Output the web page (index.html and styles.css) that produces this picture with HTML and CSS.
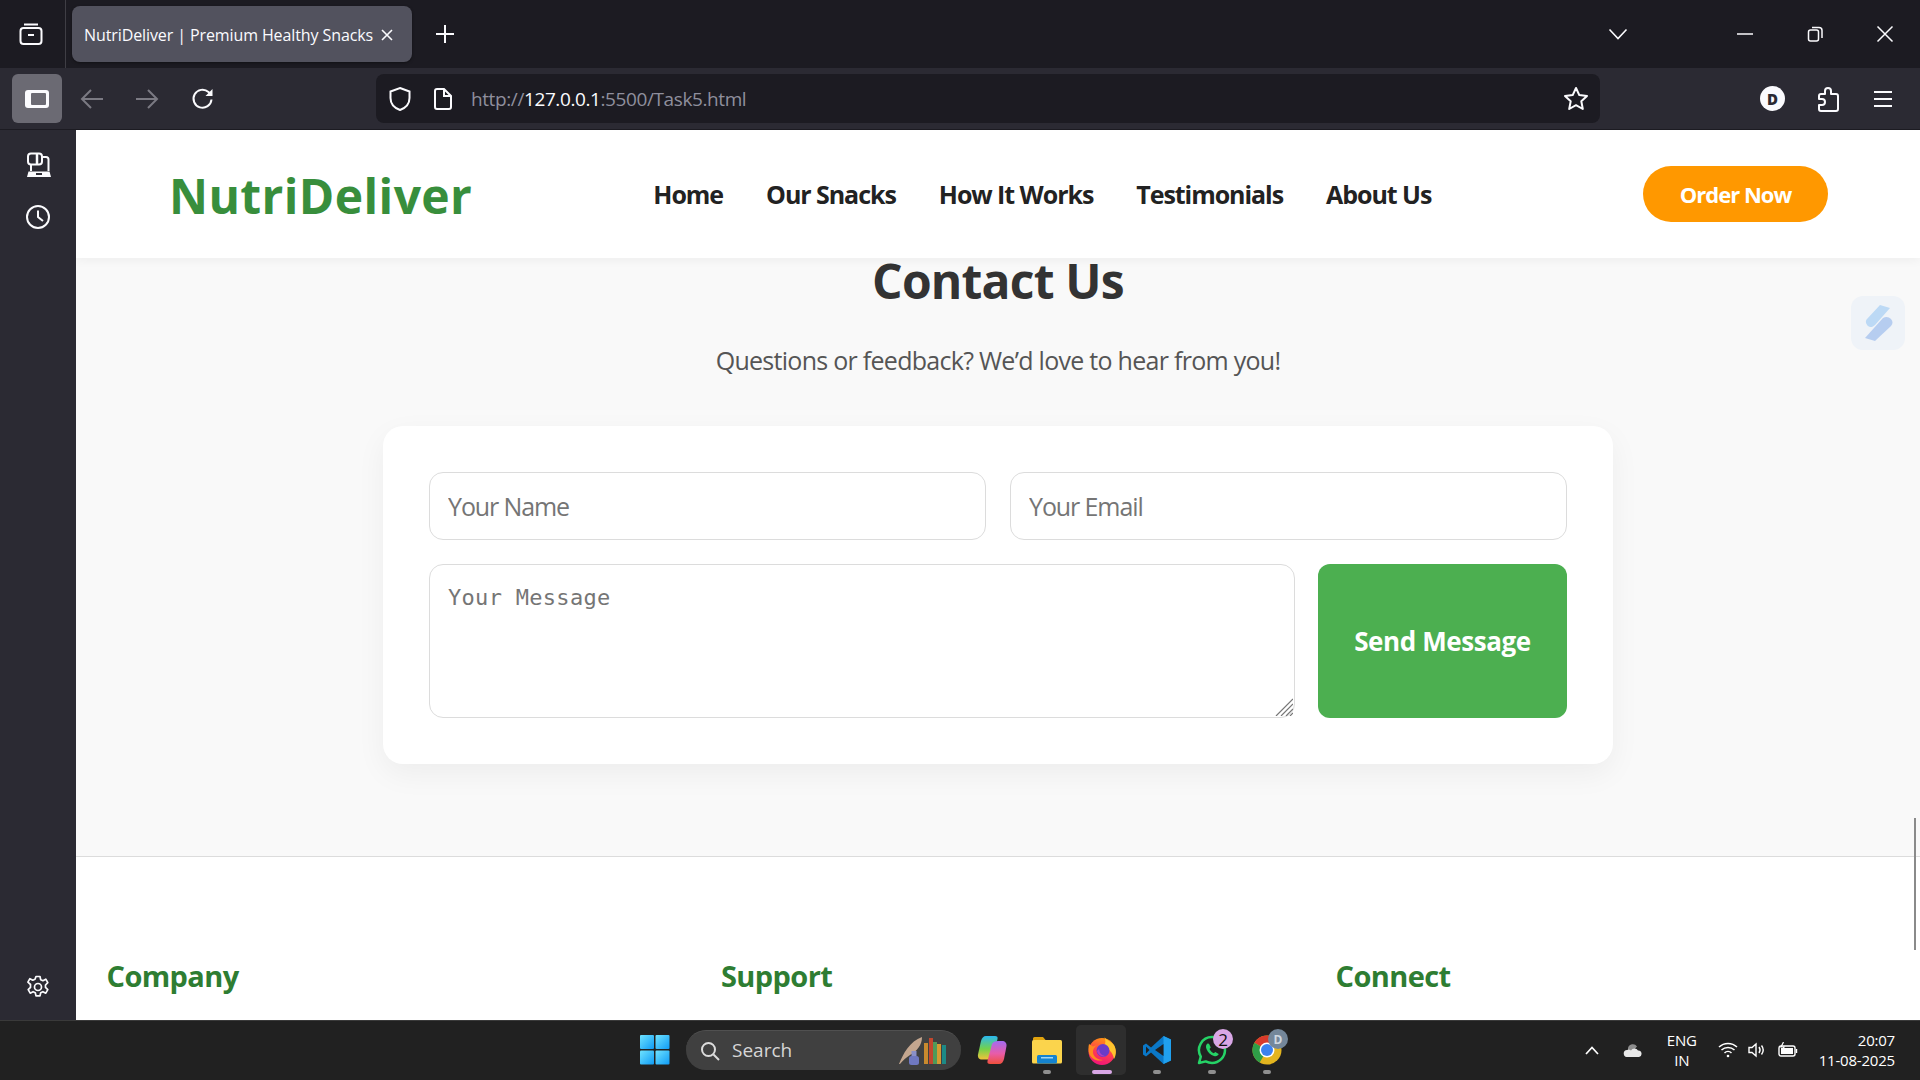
FILE: index.html
```html
<!DOCTYPE html>
<html>
<head>
    <title>NutriDeliver | Premium Healthy Snacks</title>
    <link rel="stylesheet" href="styles.css">
</head>

<body>
    <!-- BROWSER TABS -->
    <div class="tabbar">
        <div class="tabbar-left">
            <svg class="icon" width="26" height="26" viewBox="0 0 26 26" fill="none" stroke="#fbfbfe" stroke-width="2"><path d="M6 3.5h14"/><rect x="2.5" y="7" width="21" height="16" rx="3"/><path d="M10 14h6"/></svg>
        </div>
        <div class="tab">
            <span class="tab-title">NutriDeliver | Premium Healthy Snacks</span>
            <svg width="14" height="14" viewBox="0 0 14 14" stroke="#fbfbfe" stroke-width="1.6"><path d="M2 2l10 10M12 2L2 12"/></svg>
        </div>
        <svg class="new-tab" width="20" height="20" viewBox="0 0 20 20" stroke="#fbfbfe" stroke-width="2"><path d="M10 1v18M1 10h18"/></svg>
        <div class="window-controls">
            <svg class="tab-list" width="20" height="12" viewBox="0 0 20 12" fill="none" stroke="#fbfbfe" stroke-width="1.6"><path d="M1.5 1.5L10 10.5l8.5-9"/></svg>
            <svg class="win-btn" width="18" height="18" viewBox="0 0 18 18" stroke="#fbfbfe" stroke-width="1.5"><path d="M1 9h16"/></svg>
            <svg class="win-btn" width="18" height="18" viewBox="0 0 18 18" fill="none" stroke="#fbfbfe" stroke-width="1.5"><rect x="2.5" y="5" width="10" height="11" rx="2"/><path d="M6 2.5h7a3 3 0 0 1 3 3V13"/></svg>
            <svg class="win-btn" width="18" height="18" viewBox="0 0 18 18" stroke="#fbfbfe" stroke-width="1.5"><path d="M1.5 1.5l15 15M16.5 1.5l-15 15"/></svg>
        </div>
    </div>

    <!-- BROWSER TOOLBAR -->
    <div class="toolbar">
        <div class="sidebar-toggle">
            <svg width="26" height="20" viewBox="0 0 26 20"><rect x="1" y="1" width="24" height="18" rx="3" fill="#fbfbfe"/><rect x="7" y="4" width="15" height="12" rx="1" fill="#6b6a73"/></svg>
        </div>
        <div class="nav-buttons">
            <svg width="24" height="22" viewBox="0 0 24 22" fill="none" stroke="#7b7a83" stroke-width="2"><path d="M23 11H2M11 2l-9 9 9 9"/></svg>
            <svg width="24" height="22" viewBox="0 0 24 22" fill="none" stroke="#7b7a83" stroke-width="2"><path d="M1 11h21M13 2l9 9-9 9"/></svg>
            <svg class="reload" width="24" height="24" viewBox="0 0 24 24" fill="none" stroke="#fbfbfe" stroke-width="2"><path d="M20.5 12.5a9 9 0 1 1-3-7.5l3 3"/><path d="M21.5 2v7h-7" stroke-width="0" fill="#fbfbfe"/></svg>
        </div>
        <div class="urlbar">
            <svg width="24" height="26" viewBox="0 0 24 26" fill="none" stroke="#fbfbfe" stroke-width="2"><path d="M12 2l9.5 3.5V12c0 6-4 10-9.5 12C6.5 22 2.5 18 2.5 12V5.5z"/></svg>
            <svg class="url-doc" width="20" height="24" viewBox="0 0 20 24" fill="none" stroke="#fbfbfe" stroke-width="2"><path d="M4 2h7l7 7v11a2 2 0 0 1-2 2H4a2 2 0 0 1-2-2V4a2 2 0 0 1 2-2z"/><path d="M11 2v7h7"/></svg>
            <span class="url-text">http://<b>127.0.0.1</b>:5500/Task5.html</span>
            <svg class="url-star" width="26" height="26" viewBox="0 0 26 26" fill="none" stroke="#fbfbfe" stroke-width="2" stroke-linejoin="round"><path d="M13 2l3.3 7.1 7.7.9-5.7 5.3 1.5 7.7-6.8-3.8-6.800 3.800 1.500-7.700L2 10l7.700-.9z"/></svg>
        </div>
        <div class="toolbar-right">
            <span class="avatar">D</span>
            <svg class="puzzle" width="24" height="26" viewBox="0 0 24 26" fill="none" stroke="#fbfbfe" stroke-width="2" stroke-linejoin="round"><path d="M12 2a3 3 0 0 1 3 3v3h5a2 2 0 0 1 2 2v13a2 2 0 0 1-2 2H5a2 2 0 0 1-2-2v-4h3a3 3 0 0 0 0-6H3v-3a2 2 0 0 1 2-2h4V5a3 3 0 0 1 3-3z"/></svg>
            <svg width="20" height="18" viewBox="0 0 20 18" stroke="#fbfbfe" stroke-width="2"><path d="M1 2h18M1 9h18M1 16h18"/></svg>
        </div>
    </div>

    <div class="window-body">
        <!-- BROWSER SIDEBAR -->
        <div class="sidebar">
            <svg class="side-synced" width="26" height="26" viewBox="0 0 26 26" fill="none" stroke="#fbfbfe" stroke-width="2"><rect x="2" y="1.5" width="14" height="11" rx="3"/><path d="M11 1.5v11" stroke-width="2.5"/><path d="M17 5h3a2.5 2.5 0 0 1 2.5 2.5V19M5 13v6"/><path d="M2.5 19.5h21l1.500 5.500H1z" fill="#fbfbfe" stroke="none"/><rect x="10" y="21" width="6" height="2" fill="#2b2a33" stroke="none"/></svg>
            <svg class="side-clock" width="26" height="26" viewBox="0 0 26 26" fill="none" stroke="#fbfbfe" stroke-width="2"><circle cx="13" cy="13" r="11"/><path d="M13 6.5V13l5 4"/></svg>
            <svg class="side-gear" width="24" height="24" viewBox="0 0 24 24" fill="none" stroke="#fbfbfe" stroke-width="1.7" stroke-linejoin="round"><circle cx="12" cy="12" r="3.5"/><path d="M10 1.5h4l.7 3.2 2.2 1 2.9-1.5 2 3.5-2.300 2.300v2.400l2.300 2.300-2 3.500-2.900-1.500-2.200 1-.7 3.200h-4l-.7-3.200-2.200-1-2.900 1.500-2-3.500 2.300-2.300V9.500L1.900 7.200l2-3.500 2.900 1.500 2.200-1z"/></svg>
        </div>

        <!-- PAGE -->
        <div class="page">
            <header class="site-header">
                <a class="logo">NutriDeliver</a>
                <nav class="site-nav">
                    <a>Home</a>
                    <a>Our Snacks</a>
                    <a>How It Works</a>
                    <a>Testimonials</a>
                    <a>About Us</a>
                </nav>
                <a class="order-btn">Order Now</a>
            </header>

            <section class="contact">
                <h2>Contact Us</h2>
                <p class="contact-sub">Questions or feedback? We’d love to hear from you!</p>
                <form class="contact-card">
                    <div class="form-row">
                        <input type="text" placeholder="Your Name">
                        <input type="email" placeholder="Your Email">
                    </div>
                    <div class="form-row">
                        <div class="message-wrap">
                            <textarea placeholder="Your Message"></textarea>
                            <svg class="resize-grip" width="18" height="18" viewBox="0 0 18 18" stroke="#777" stroke-width="1.2"><path d="M1 18L18 1M6 18L18 6M11 18l7-7M15 18l3-3"/></svg>
                        </div>
                        <button type="button" class="send-btn">Send Message</button>
                    </div>
                </form>
            </section>

            <footer class="site-footer">
                <h3>Company</h3>
                <h3>Support</h3>
                <h3>Connect</h3>
            </footer>

            <!-- extension bubble and overlay scrollbar -->
            <div class="ext-bubble">
                <svg width="30" height="38" viewBox="0 0 30 38"><path d="M17 1l10 3L12 21c-2 2-5 3-7 1s-3-5-1-7z" fill="#bcd9f5"/><path d="M20 14c3-2 6-1 8 1s2 5 0 7L12 37 2 34z" fill="#b6cdf0"/></svg>
            </div>
            <div class="scroll-thumb"></div>
        </div>
    </div>

    <!-- WINDOWS TASKBAR -->
    <div class="taskbar">
        <svg class="start" width="30" height="30" viewBox="0 0 30 30">
            <defs>
                <linearGradient id="winBlue" x1="0" y1="0" x2="1" y2="1"><stop offset="0" stop-color="#6fe3ff"/><stop offset="1" stop-color="#0f9bf5"/></linearGradient>
            </defs>
            <rect x="0" y="0" width="14" height="14" rx="1" fill="url(#winBlue)"/>
            <rect x="15.5" y="0" width="14" height="14" rx="1" fill="url(#winBlue)"/>
            <rect x="0" y="15.5" width="14" height="14" rx="1" fill="url(#winBlue)"/>
            <rect x="15.5" y="15.5" width="14" height="14" rx="1" fill="url(#winBlue)"/>
        </svg>
        <div class="search-pill">
            <svg width="20" height="20" viewBox="0 0 20 20" fill="none" stroke="#dcdcdc" stroke-width="2"><circle cx="8.5" cy="8.5" r="6.5"/><path d="M13.5 13.5L19 19"/></svg>
            <span>Search</span>
            <svg class="doodle" width="52" height="30" viewBox="0 0 52 30">
                <path d="M1 28C5 18 12 5 24 1c0 8-5 14-12 18-3 2-7 5-10 9z" fill="#c4a68f"/>
                <rect x="11" y="20" width="10" height="9" rx="2.5" fill="#6f78c0"/>
                <rect x="13.5" y="15" width="5" height="5" fill="#8a90c8"/>
                <rect x="26" y="7" width="4" height="21" fill="#c98a2e"/>
                <rect x="31" y="2" width="4" height="26" fill="#c2472e"/>
                <rect x="35" y="6" width="4" height="22" fill="#4f9a5a"/>
                <rect x="39" y="8" width="4" height="20" fill="#d49a32"/>
                <rect x="44" y="9" width="4" height="19" fill="#1d8a86"/>
            </svg>
        </div>

        <div class="task-icon">
            <svg width="30" height="30" viewBox="0 0 30 30">
                <defs>
                    <linearGradient id="copA" x1="0" y1="0" x2="0" y2="1"><stop offset="0" stop-color="#2ab8f0"/><stop offset=".55" stop-color="#74d24a"/><stop offset="1" stop-color="#f2c23a"/></linearGradient>
                    <linearGradient id="copB" x1="0" y1="0" x2="0" y2="1"><stop offset="0" stop-color="#a26bf0"/><stop offset=".55" stop-color="#e85ca8"/><stop offset="1" stop-color="#f0503c"/></linearGradient>
                </defs>
                <path d="M9 1h9c2 0 3 1 2.5 3L16 21c-.7 2.5-3 3.5-5 3.5H5c-3 0-4.5-2-4-5L4 6c.7-3 2.5-5 5-5z" fill="url(#copA)"/>
                <path d="M21 6h4c3 0 4.8 2 4.500 5L27 24c-.7 3-2.500 5-5 5h-9c-2 0-3-1-2.500-3L15 9c.7-2 3.500-3 6-3z" fill="url(#copB)"/>
            </svg>
        </div>
        <div class="task-icon running">
            <svg width="30" height="28" viewBox="0 0 30 28">
                <path d="M1 2.5A1.5 1.5 0 0 1 2.5 1h8.5l3 3.500H1z" fill="#e0a30e"/>
                <rect x="0" y="4" width="30" height="23.5" rx="1.5" fill="#fbd44c"/>
                <rect x="5" y="19" width="20" height="8.5" rx="1.5" fill="#1583cf"/>
                <rect x="9" y="21" width="12" height="1.5" fill="#9fd6f5"/>
            </svg>
        </div>
        <div class="task-icon active">
            <svg width="30" height="30" viewBox="0 0 30 30">
                <defs>
                    <linearGradient id="ffBody" x1=".7" y1="0" x2=".4" y2="1"><stop offset="0" stop-color="#ff980e"/><stop offset=".55" stop-color="#ff3d50"/><stop offset="1" stop-color="#f0157a"/></linearGradient>
                </defs>
                <circle cx="15" cy="16.5" r="13.5" fill="url(#ffBody)"/>
                <path d="M17 1c1 4 7 5 10 9 3 5 2 11 0 14-1-6-5-11-11-12 3-3 3-7 1-11z" fill="#ffc42e"/>
                <path d="M2 9l4 2.5 4-1.5c-3 2-4.5 5-4 8 1 4 5 7 10 7-6 2-12-1-14-7-.7-3-.7-6 0-9z" fill="#ff8a1e"/>
                <circle cx="16" cy="15.5" r="6.5" fill="#6a3bc8"/>
                <path d="M10 16c1 4 5 6.5 9.5 5C15 21 12.5 18.5 12 14z" fill="#b040c0"/>
            </svg>
        </div>
        <div class="task-icon running">
            <svg width="30" height="30" viewBox="0 0 30 30">
                <path d="M21.5 1L29 4.5v21L21.5 29 9 17.5l-5 4-3-2v-9l3-2 5 4z" fill="#0a78c8"/>
                <path d="M21.5 1L29 4.5v21L21.5 29z" fill="#20a0ee"/>
                <path d="M21.5 9v12L13 15z" fill="#212121"/>
                <path d="M4 11.5L7.5 15 4 18.5z" fill="#212121"/>
            </svg>
        </div>
        <div class="task-icon running">
            <svg width="30" height="30" viewBox="0 0 30 30">
                <path d="M15 2a13 13 0 0 1 0 26c-2.3 0-4.4-.6-6.3-1.6L2 28l1.8-6.4A13 13 0 0 1 15 2z" fill="#212121" stroke="#25d366" stroke-width="2.5" stroke-linejoin="round"/>
                <path d="M10.5 8.5c-1.5 1-2 3-1 5.5 1.5 3.5 4 6 7.5 7 2.5.6 4-.3 4.7-2l-3.4-2-1.5 1.3c-2-.8-3.5-2.5-4.3-4.3l1.3-1.5-1.8-3.7z" fill="#25d366"/>
            </svg>
            <span class="badge badge-count">2</span>
        </div>
        <div class="task-icon running">
            <svg width="30" height="30" viewBox="0 0 30 30">
                <circle cx="15" cy="15" r="14.5" fill="#e3b51f"/>
                <path d="M15 15L2.4 7.7A14.5 14.5 0 0 1 27.6 7.7z" fill="#d93a2b"/>
                <path d="M15 15l-7.3 12.6A14.5 14.5 0 0 1 2.4 7.7z" fill="#2f9e48"/>
                <circle cx="15" cy="15" r="7.5" fill="#fff"/>
                <circle cx="15" cy="15" r="6" fill="#3b82f0"/>
            </svg>
            <span class="badge badge-profile">D</span>
        </div>

        <div class="tray">
            <svg width="14" height="9" viewBox="0 0 14 9" fill="none" stroke="#fff" stroke-width="1.7"><path d="M1 8l6-6.5L13 8"/></svg>
            <svg class="tray-cloud" width="20" height="14" viewBox="0 0 20 14"><path d="M5 5a5 5 0 0 1 9-1.5L10 8 5 9z" fill="#8d8d8d"/><path d="M4.5 14a3.5 3.5 0 0 1-.5-7l2-.5 2 1a4 4 0 0 1 7 0A3.3 3.3 0 0 1 16 14z" fill="#e8e8e8"/></svg>
            <div class="tray-lang">ENG<br>IN</div>
            <svg class="tray-wifi" width="20" height="16" viewBox="0 0 20 16" fill="none" stroke="#fff" stroke-width="1.5"><path d="M1 5a13 13 0 0 1 18 0M3.5 8a9.5 9.5 0 0 1 13 0M6.5 11a5 5 0 0 1 7 0"/><circle cx="10" cy="14" r="1.3" fill="#fff" stroke="none"/></svg>
            <svg class="tray-sound" width="18" height="16" viewBox="0 0 18 16" fill="none" stroke="#fff" stroke-width="1.4"><path d="M1 5.5h3L8 2v12l-4-3.5H1z"/><path d="M11 5c1.3 1.8 1.3 4.2 0 6M13.5 3.5c2 2.6 2 6.400 0 9"/></svg>
            <svg width="20" height="16" viewBox="0 0 20 16" fill="none" stroke="#fff" stroke-width="1.4"><rect x="1" y="4" width="16" height="10" rx="2"/><rect x="3" y="6" width="12" height="6" fill="#fff" stroke="none"/><path d="M18.5 7v4"/><path d="M5.5 0L3 5h3L4.5 9" stroke="#fff" stroke-width="1.2"/></svg>
            <div class="tray-clock">20:07<br>11-08-2025</div>
        </div>
    </div>
</body>
</html>
```
FILE: styles.css
```css
/* GENERAL */
* {
    box-sizing: border-box;
}

body {
    margin: 0;
    width: 1920px;
    height: 1080px;
    overflow: hidden;
    display: flex;
    flex-direction: column;
    font-family: "Open Sans", "Noto Sans", sans-serif;
    background-color: #1c1b22;
}

svg {
    display: block;
    flex-shrink: 0;
}


/* BROWSER TABS */
.tabbar {
    height: 68px;
    display: flex;
    align-items: center;
    background-color: #1c1b22;
}

.tabbar-left {
    width: 66px;
    height: 100%;
    display: flex;
    align-items: center;
    padding-left: 18px;
    border-right: 1px solid #3f3e45;
}

.tab {
    margin-left: 6px;
    width: 340px;
    height: 56px;
    padding: 2px 18px 0 12px;
    display: flex;
    align-items: center;
    justify-content: space-between;
    background-color: #52525e;
    border-radius: 8px;
    color: #fbfbfe;
    font-size: 16px;
    box-shadow: 0 1px 3px rgba(0, 0, 0, 0.4);
}

.tab-title {
    letter-spacing: -0.1px;
    white-space: nowrap;
}

.new-tab {
    margin-left: 23px;
}

.window-controls {
    margin-left: auto;
    display: flex;
    align-items: center;
    padding-right: 26px;
}

.tab-list {
    margin-right: 108px;
}

.win-btn {
    margin-left: 52px;
}

.tab-list + .win-btn {
    margin-left: 0;
}


/* BROWSER TOOLBAR */
.toolbar {
    height: 62px;
    display: flex;
    align-items: center;
    background-color: #2b2a33;
    padding-left: 12px;
    border-bottom: 1px solid #1c1b22;
}

.sidebar-toggle {
    width: 50px;
    height: 49px;
    border-radius: 6px;
    background-color: #6b6a73;
    display: flex;
    align-items: center;
    justify-content: center;
}

.nav-buttons {
    display: flex;
    align-items: center;
    gap: 31px;
    margin-left: 18px;
}

.reload {
    margin-left: 1px;
}

.urlbar {
    width: 1224px;
    height: 49px;
    margin-left: 161px;
    display: flex;
    align-items: center;
    padding: 0 11px 0 12px;
    background-color: #1c1b22;
    border-radius: 8px;
}

.url-doc {
    margin-left: 21px;
}

.url-text {
    margin-left: 18px;
    padding-top: 1px;
    color: #8f8f9d;
    font-size: 19px;
    letter-spacing: -0.4px;
}

.url-text b {
    color: #fbfbfe;
    font-weight: 400;
}

.url-star {
    margin-left: auto;
}

.toolbar-right {
    display: flex;
    align-items: center;
    margin-left: auto;
    padding-right: 27px;
    gap: 32px;
}

.puzzle {
    margin: 0 1px 0 -1px;
}

.avatar {
    width: 25px;
    height: 25px;
    border-radius: 50%;
    background-color: #fbfbfe;
    color: #2b2a33;
    font-size: 15px;
    font-weight: 800;
    display: flex;
    align-items: center;
    justify-content: center;
}


/* BROWSER SIDEBAR */
.window-body {
    flex: 1;
    display: flex;
    min-height: 0;
}

.sidebar {
    width: 76px;
    display: flex;
    flex-direction: column;
    align-items: center;
    background-color: #2b2a33;
}

.side-synced {
    margin: 22px 0 0 2px;
}

.side-clock {
    margin-top: 26px;
}

.side-gear {
    margin-top: auto;
    margin-bottom: 21px;
}


/* PAGE */
.page {
    position: relative;
    flex: 1;
    display: flex;
    flex-direction: column;
    overflow: hidden;
    background-color: #f9f9f9;
}

.site-header {
    position: relative;
    height: 128px;
    flex-shrink: 0;
    display: flex;
    align-items: center;
    padding: 0 92px 0 93px;
    background-color: #fff;
    box-shadow: 0 2px 10px rgba(0, 0, 0, 0.05);
}

.logo {
    padding-top: 2px;
    font-size: 48px;
    font-weight: 700;
    color: #388e3c;
    letter-spacing: 0.4px;
}

.site-nav {
    display: flex;
    gap: 43px;
    margin-left: 181px;
}

.site-nav a {
    font-size: 25px;
    font-weight: 700;
    color: #222;
    letter-spacing: -1.05px;
    white-space: nowrap;
}

.order-btn {
    margin-left: auto;
    width: 185px;
    height: 56px;
    border-radius: 28px;
    background-color: #ff9800;
    color: #fff;
    font-size: 22px;
    font-weight: 700;
    letter-spacing: -1px;
    display: flex;
    align-items: center;
    justify-content: center;
}


/* CONTACT */
.contact {
    height: 598px;
    flex-shrink: 0;
    display: flex;
    flex-direction: column;
    align-items: center;
}

.contact h2 {
    margin: -8px 0 0;
    font-size: 48px;
    line-height: 62px;
    font-weight: 700;
    color: #333;
    letter-spacing: -0.8px;
}

.contact-sub {
    margin: 31px 0 0;
    font-size: 25px;
    line-height: 34px;
    color: #555;
    letter-spacing: -0.72px;
}

.contact-card {
    margin-top: 49px;
    width: 1230px;
    padding: 46px;
    display: flex;
    flex-direction: column;
    gap: 24px;
    background-color: #fff;
    border-radius: 20px;
    box-shadow: 0 10px 30px rgba(0, 0, 0, 0.05);
}

.form-row {
    display: flex;
    gap: 24px;
}

.form-row input {
    flex: 1;
    min-width: 0;
    height: 68px;
    padding: 0 18px;
    border: 1px solid #dcdcdc;
    border-radius: 14px;
    font-family: "Open Sans", sans-serif;
    font-size: 25px;
    letter-spacing: -1.1px;
    background-color: #fff;
}

.message-wrap {
    position: relative;
    flex: 1;
    min-width: 0;
    height: 154px;
    margin-right: -1px;
}

.form-row textarea {
    display: block;
    width: 100%;
    height: 100%;
    padding: 20px 18px;
    border: 1px solid #dcdcdc;
    border-radius: 14px;
    font-family: "DejaVu Sans Mono", monospace;
    font-size: 22px;
    letter-spacing: 0.3px;
    background-color: #fff;
    resize: none;
}

.resize-grip {
    position: absolute;
    right: 2px;
    bottom: 2px;
}

::placeholder {
    color: #757575;
}

.send-btn {
    width: 249px;
    flex-shrink: 0;
    border: none;
    border-radius: 12px;
    background-color: #4caf50;
    color: #fff;
    font-family: "Open Sans", sans-serif;
    font-size: 26px;
    font-weight: 700;
    letter-spacing: -0.4px;
}


/* FOOTER */
.site-footer {
    flex: 1;
    display: grid;
    grid-template-columns: repeat(3, 614.5px);
    padding: 99px 0 0 30.5px;
    background-color: #fff;
    border-top: 1px solid #dcdcdc;
}

.site-footer h3 {
    margin: 0;
    font-size: 29px;
    line-height: 40px;
    font-weight: 700;
    color: #2e7d32;
    letter-spacing: -0.6px;
}


/* OVERLAYS */
.ext-bubble {
    position: absolute;
    top: 166px;
    right: 15px;
    width: 54px;
    height: 54px;
    border-radius: 12px;
    background-color: #eff3f8;
    display: flex;
    align-items: center;
    justify-content: center;
}

.scroll-thumb {
    position: absolute;
    top: 688px;
    right: 4px;
    width: 2px;
    height: 132px;
    background-color: #8a8a8a;
}


/* WINDOWS TASKBAR */
.taskbar {
    height: 60px;
    flex-shrink: 0;
    display: flex;
    align-items: center;
    padding-left: 640px;
    background-color: #212121;
    box-shadow: inset 0 1px 0 #3a3a3a;
}

.search-pill {
    margin: 0 3px 0 16px;
    width: 275px;
    height: 40px;
    padding: 0 11px 0 14px;
    display: flex;
    align-items: center;
    border-radius: 20px;
    background-color: #404040;
    border-top: 1px solid #505050;
    color: #d6d6d6;
    font-size: 19px;
}

.search-pill span {
    margin: -2px 0 0 12px;
}

.doodle {
    margin-left: auto;
}

.task-icon {
    position: relative;
    width: 55px;
    height: 50px;
    display: flex;
    align-items: center;
    justify-content: center;
}

.task-icon.running::after,
.task-icon.active::after {
    content: "";
    position: absolute;
    left: 50%;
    bottom: 1px;
    width: 8px;
    height: 4px;
    margin-left: -4px;
    border-radius: 2px;
    background-color: #8f8f8f;
}

.task-icon.active::before {
    content: "";
    position: absolute;
    top: 0;
    left: 2px;
    right: 3px;
    bottom: 0;
    border-radius: 5px;
    background-color: #2e2e2e;
}

.task-icon.active svg {
    position: relative;
}

.task-icon.active::after {
    width: 20px;
    margin-left: -10px;
    background-color: #d9a7e6;
}

.badge {
    position: absolute;
    top: 4px;
    right: 6px;
    width: 20px;
    height: 20px;
    border-radius: 50%;
    display: flex;
    align-items: center;
    justify-content: center;
    font-size: 17px;
}

.badge-count {
    background-color: #d9a7e6;
    color: #111;
}

.badge-profile {
    background-color: #74879a;
    color: #cfd8e0;
    font-size: 12px;
    font-weight: 700;
}


/* TRAY */
.tray {
    margin-left: auto;
    display: flex;
    align-items: center;
    padding-right: 25px;
    color: #fff;
    font-size: 15px;
    line-height: 20px;
    letter-spacing: -0.2px;
}

.tray-cloud {
    margin-left: 24px;
}

.tray-lang {
    margin: 0 21px 0 24px;
    text-align: center;
}

.tray-wifi {
    margin-right: 10px;
}

.tray-sound {
    margin-right: 12px;
}

.tray-clock {
    margin-left: 21px;
    text-align: right;
}
```
